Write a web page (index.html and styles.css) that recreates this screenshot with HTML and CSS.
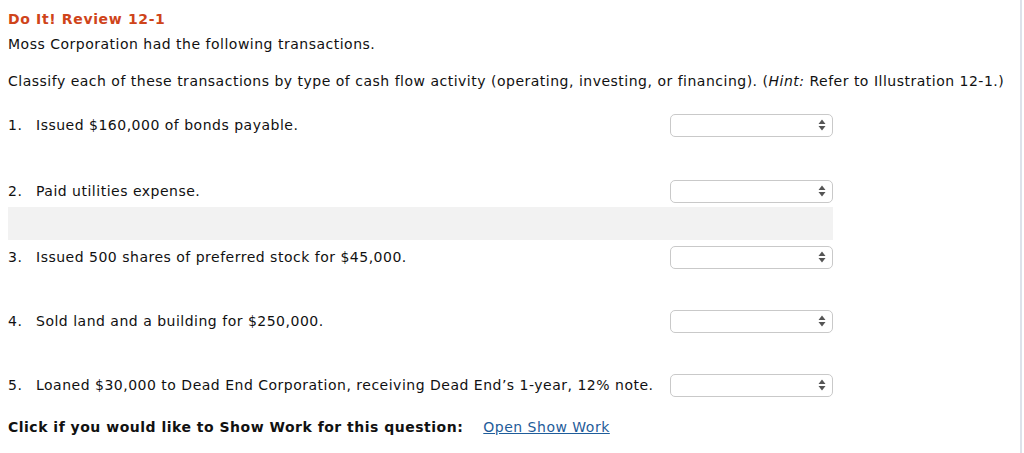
FILE: index.html
```html
<!DOCTYPE html>
<html>
<head>
<meta charset="utf-8">
<link rel="stylesheet" href="styles.css">
</head>
<body>
<div class="page">
  <h1 class="title">Do It! Review 12-1</h1>
  <p class="intro">Moss Corporation had the following transactions.</p>
  <p class="instr">Classify each of these transactions by type of cash flow activity (operating, investing, or financing). (<em>Hint:</em> Refer to Illustration 12-1.)</p>
  <div class="list">
    <div class="row"><span class="num">1.</span><span class="txt">Issued $160,000 of bonds payable.</span><div class="select"><svg width="8" height="12" viewBox="0 0 8 12"><path d="M4 0.5 L7.5 5 L0.5 5 Z M4 11.5 L7.5 7 L0.5 7 Z" fill="#555"/></svg></div></div>
    <div class="gap"></div>
    <div class="row"><span class="num">2.</span><span class="txt">Paid utilities expense.</span><div class="select"><svg width="8" height="12" viewBox="0 0 8 12"><path d="M4 0.5 L7.5 5 L0.5 5 Z M4 11.5 L7.5 7 L0.5 7 Z" fill="#555"/></svg></div></div>
    <div class="gap shaded"></div>
    <div class="row"><span class="num">3.</span><span class="txt">Issued 500 shares of preferred stock for $45,000.</span><div class="select"><svg width="8" height="12" viewBox="0 0 8 12"><path d="M4 0.5 L7.5 5 L0.5 5 Z M4 11.5 L7.5 7 L0.5 7 Z" fill="#555"/></svg></div></div>
    <div class="gap short"></div>
    <div class="row"><span class="num">4.</span><span class="txt">Sold land and a building for $250,000.</span><div class="select"><svg width="8" height="12" viewBox="0 0 8 12"><path d="M4 0.5 L7.5 5 L0.5 5 Z M4 11.5 L7.5 7 L0.5 7 Z" fill="#555"/></svg></div></div>
    <div class="gap short"></div>
    <div class="row"><span class="num">5.</span><span class="txt">Loaned $30,000 to Dead End Corporation, receiving Dead End’s 1-year, 12% note.</span><div class="select"><svg width="8" height="12" viewBox="0 0 8 12"><path d="M4 0.5 L7.5 5 L0.5 5 Z M4 11.5 L7.5 7 L0.5 7 Z" fill="#555"/></svg></div></div>
  </div>
  <p class="showwork"><strong>Click if you would like to Show Work for this question:</strong><a class="link" href="#">Open Show Work</a></p>
</div>
</body>
</html>
```
FILE: styles.css
```css
html, body {
  margin: 0;
  padding: 0;
  background: #ffffff;
}
body {
  font-family: "DejaVu Sans", Verdana, sans-serif;
  font-size: 14px;
  letter-spacing: 0.5px;
  color: #111;
}
.page {
  box-sizing: border-box;
  width: 1022px;
  height: 453px;
  border-right: 2px solid #dde2ea;
  padding: 10px 0 0 8px;
}
.title {
  margin: 0;
  font-size: 14px;
  line-height: 18px;
  font-weight: bold;
  letter-spacing: 0.65px;
  color: #cf441a;
}
.intro {
  margin: 8px 0 0 0;
  line-height: 17px;
}
.instr {
  margin: 20px 0 0 0;
  line-height: 17px;
}
.instr em {
  font-style: italic;
}
.list {
  margin-top: 18px;
  width: 825px;
  display: flex;
  flex-direction: column;
}
.row {
  height: 33px;
  display: flex;
  align-items: center;
}
.num {
  width: 28px;
  flex: none;
}
.txt {
  flex: 1;
}
.select {
  box-sizing: border-box;
  width: 163px;
  height: 23px;
  border: 1px solid #c9c9c9;
  border-radius: 5px;
  background: #fff;
  display: flex;
  align-items: center;
  justify-content: flex-end;
  padding-right: 6px;
  margin-top: 1px;
}
.gap {
  height: 33px;
}
.gap.short {
  height: 31px;
}
.gap.shaded {
  background: #f2f2f2;
}
.showwork {
  margin: 18px 0 0 0;
  line-height: 17px;
}
.showwork strong {
  font-weight: bold;
}
.link {
  margin-left: 20px;
  color: #1f5d9a;
  text-decoration: underline;
}
```
